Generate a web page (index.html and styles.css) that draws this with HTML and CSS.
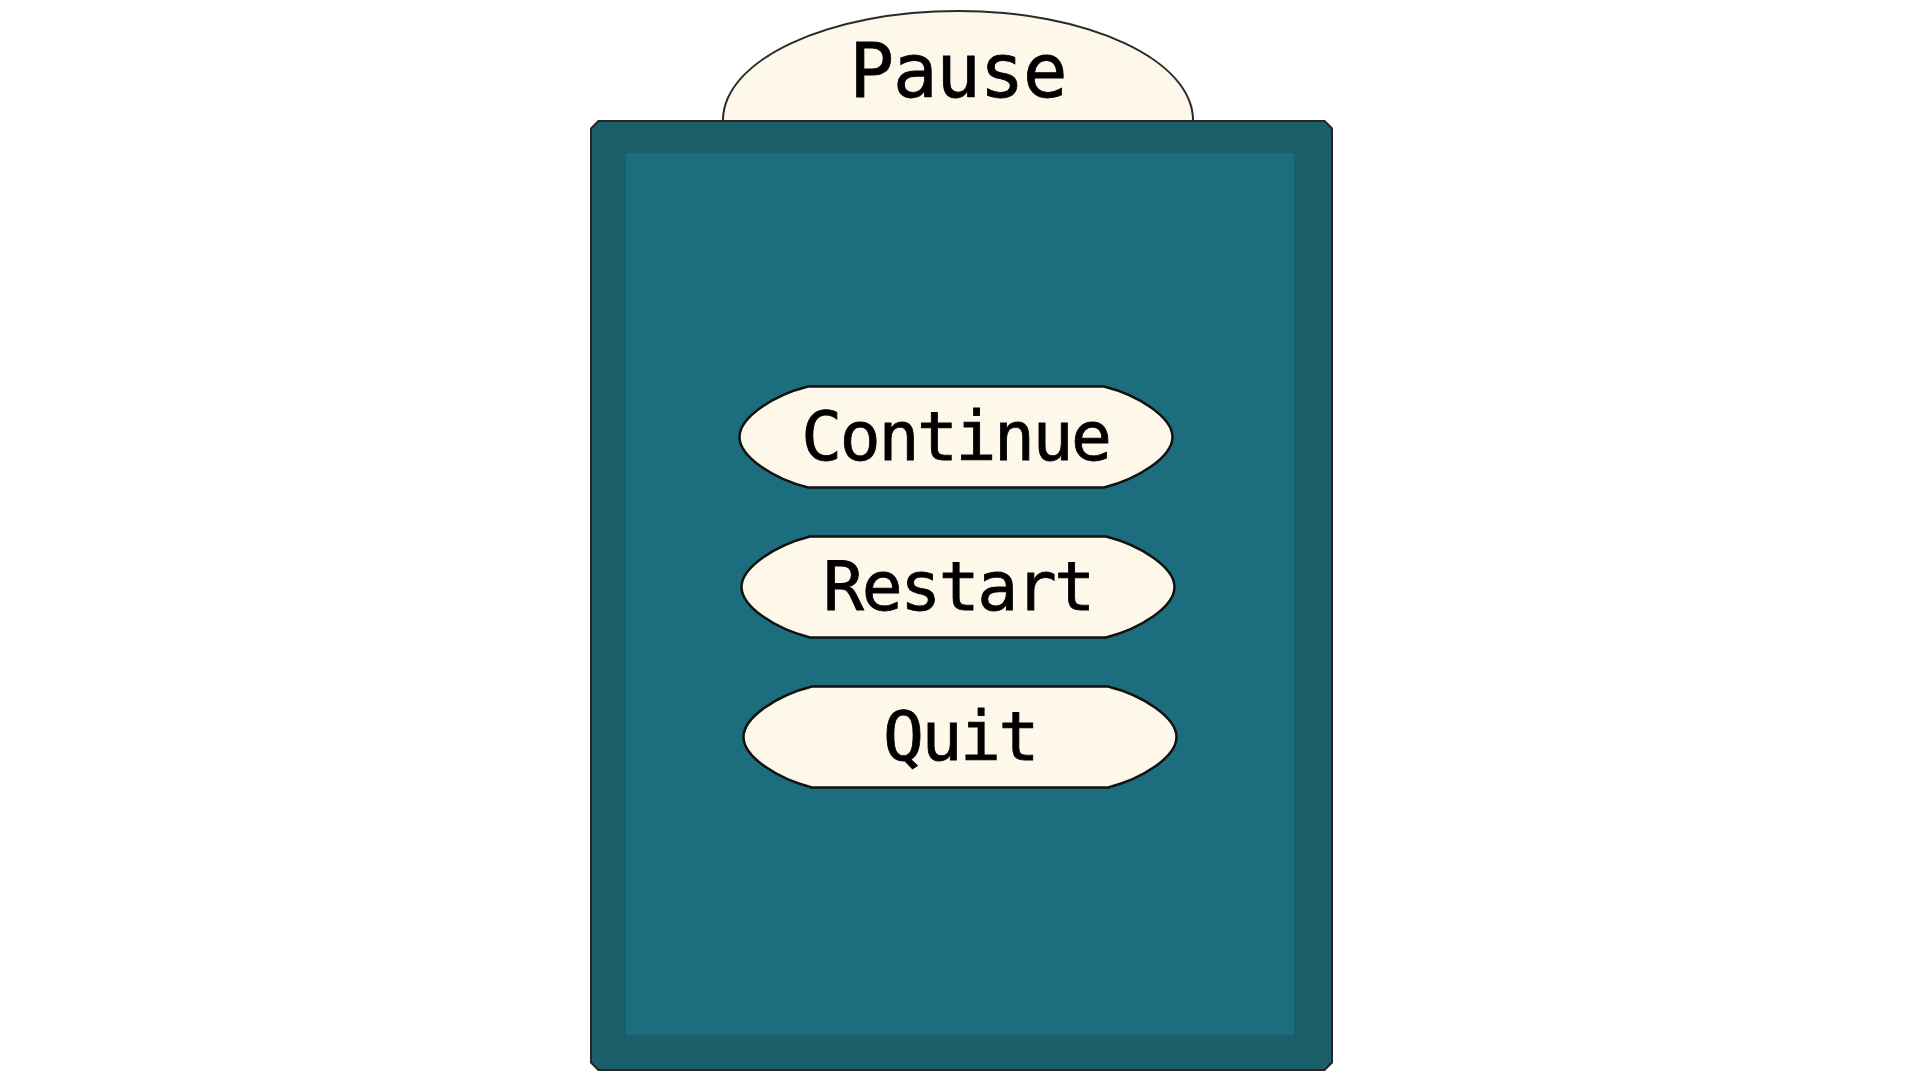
FILE: index.html
```html
<!DOCTYPE html>
<html>
<head>
<meta charset="utf-8">
<title>Pause</title>
<link rel="stylesheet" href="styles.css">
</head>
<body>
<div class="stage">
  <div class="cap"><span class="cap-title">Pause</span></div>
  <div class="panel">
    <div class="frame">
      <div class="body">
        <button class="btn btn-continue">
          <svg class="btn-shape" viewBox="0 0 436 104" preserveAspectRatio="none"><path d="M70 1.5 H366 C400 10 434.5 32 434.5 52 C434.5 72 400 94 366 102.5 H70 C36 94 1.5 72 1.5 52 C1.5 32 36 10 70 1.5 Z"/></svg>
          <span class="btn-label">Continue</span>
        </button>
        <button class="btn btn-restart">
          <svg class="btn-shape" viewBox="0 0 436 104" preserveAspectRatio="none"><path d="M70 1.5 H366 C400 10 434.5 32 434.5 52 C434.5 72 400 94 366 102.5 H70 C36 94 1.5 72 1.5 52 C1.5 32 36 10 70 1.5 Z"/></svg>
          <span class="btn-label">Restart</span>
        </button>
        <button class="btn btn-quit">
          <svg class="btn-shape" viewBox="0 0 436 104" preserveAspectRatio="none"><path d="M70 1.5 H366 C400 10 434.5 32 434.5 52 C434.5 72 400 94 366 102.5 H70 C36 94 1.5 72 1.5 52 C1.5 32 36 10 70 1.5 Z"/></svg>
          <span class="btn-label">Quit</span>
        </button>
      </div>
    </div>
  </div>
</div>
</body>
</html>
```
FILE: styles.css
```css
html, body {
  margin: 0;
  padding: 0;
  background: #ffffff;
}

.stage {
  display: flex;
  flex-direction: column;
  align-items: center;
  padding-top: 10px;
  font-family: "DejaVu Sans Mono", "Liberation Mono", monospace;
}

.cap {
  width: 472px;
  height: 110px;
  box-sizing: border-box;
  border: 2px solid #2a2a2a;
  border-bottom: 0;
  border-radius: 236px 236px 0 0 / 110px 110px 0 0;
  background: #fef8ea;
  margin-left: -4px;
  display: flex;
  justify-content: center;
  padding-top: 22px;
}

.cap-title {
  font-size: 74px;
  line-height: 74px;
  height: 74px;
  letter-spacing: -1.2px;
  color: #000;
  -webkit-text-stroke: 0.8px #000;
}

.panel {
  width: 743px;
  height: 951px;
  box-sizing: border-box;
  padding: 2px;
  margin-left: 3px;
  background: #262626;
  clip-path: polygon(8px 0, calc(100% - 8px) 0, 100% 8px, 100% calc(100% - 8px), calc(100% - 8px) 100%, 8px 100%, 0 calc(100% - 8px), 0 8px);
}

.frame {
  height: 100%;
  box-sizing: border-box;
  padding: 31px 37px 34px 34px;
  background: #1b5f6b;
  clip-path: polygon(7px 0, calc(100% - 7px) 0, 100% 7px, 100% calc(100% - 7px), calc(100% - 7px) 100%, 7px 100%, 0 calc(100% - 7px), 0 7px);
}

.body {
  height: 100%;
  box-sizing: border-box;
  background: #1c6e7e;
  display: flex;
  flex-direction: column;
  align-items: center;
  padding-top: 232px;
  gap: 46px;
}

.btn {
  position: relative;
  width: 436px;
  height: 104px;
  padding: 0;
  border: 0;
  background: transparent;
  display: flex;
  align-items: center;
  justify-content: center;
  font-family: "DejaVu Sans Mono", "Liberation Mono", monospace;
  cursor: pointer;
}

.btn-continue { margin-left: -9px; }
.btn-restart { margin-left: -4px; }
.btn-quit { margin-left: 0; }

.btn-shape {
  position: absolute;
  left: 0;
  top: 0;
  width: 100%;
  height: 100%;
}

.btn-shape path {
  fill: #fef8ea;
  stroke: #111111;
  stroke-width: 2.5;
}

.btn-label {
  position: relative;
  font-size: 68px;
  line-height: 68px;
  letter-spacing: -2.4px;
  color: #000;
  -webkit-text-stroke: 0.8px #000;
}
```
